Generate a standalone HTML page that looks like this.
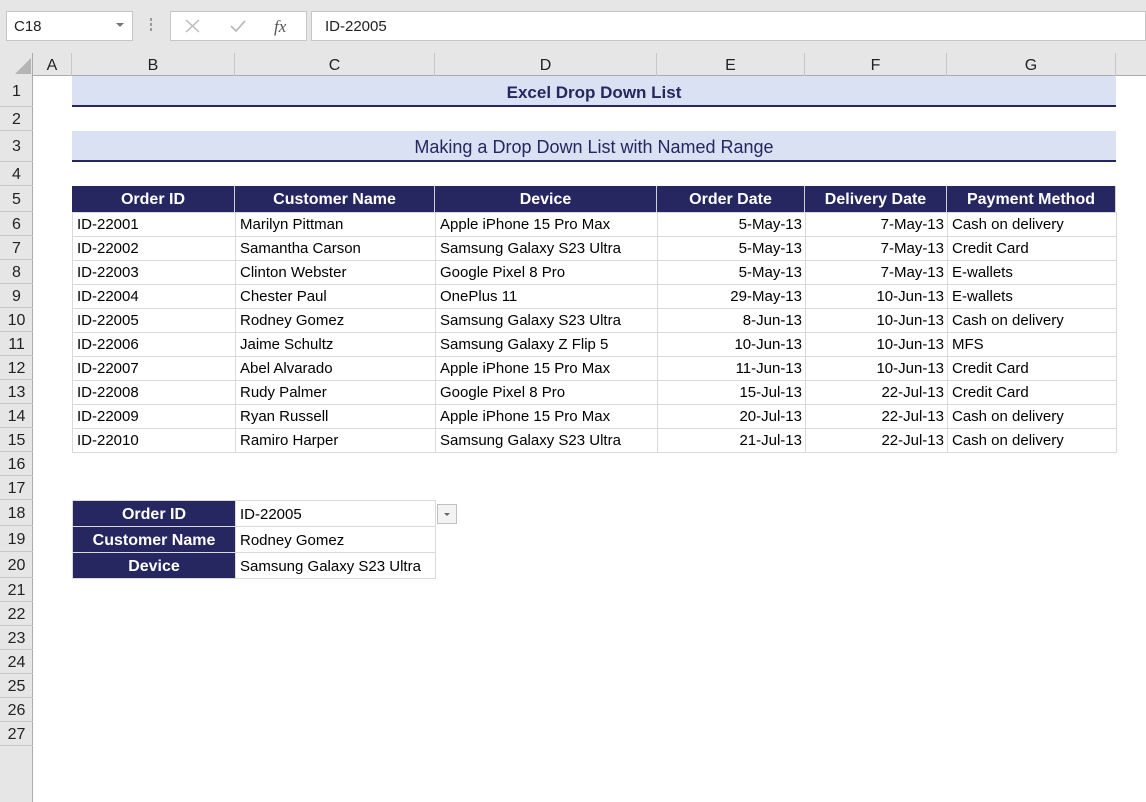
<!DOCTYPE html>
<html><head><meta charset="utf-8"><style>
body{margin:0;width:1146px;height:749px;overflow:hidden;background:#fff;font-family:"Liberation Sans",sans-serif;position:relative}
div{position:absolute;box-sizing:border-box}
.t{white-space:nowrap;overflow:visible;font-size:15px;line-height:1;display:flex;align-items:center}
#g .t{padding-top:2px}
</style></head><body>
<div style="left:0;top:0;width:1146px;height:53px;background:#e6e6e6"></div>
<div style="left:6px;top:11px;width:127px;height:30px;background:#fff;border:1px solid #c6c6c6"></div>
<div class="t" style="left:14px;top:11px;height:30px;font-size:15px;color:#222">C18</div>
<div style="left:116px;top:23px;width:0;height:0;border-left:4px solid transparent;border-right:4px solid transparent;border-top:4px solid #777"></div>
<div style="left:150px;top:18px;width:2px;height:3px;background:#999;box-shadow:0 5px #999,0 10px #999"></div>
<div style="left:170px;top:11px;width:137px;height:30px;background:#fff;border:1px solid #c6c6c6"></div>
<svg style="position:absolute;left:184px;top:18px" width="18" height="16"><path d="M2 2L15 14M15 2L2 14" stroke="#bbb" stroke-width="1.5"/></svg>
<svg style="position:absolute;left:229px;top:18px" width="18" height="16"><path d="M2 8L7 13L16 3" stroke="#bbb" stroke-width="1.8" fill="none"/></svg>
<div class="t" style="left:274px;top:11px;height:30px;font-family:'Liberation Serif',serif;font-style:italic;font-size:17px;color:#555">fx</div>
<div style="left:311px;top:11px;width:835px;height:30px;background:#fff;border:1px solid #c6c6c6"></div>
<div class="t" style="left:325px;top:11px;height:30px;font-size:15px;color:#222">ID-22005</div>
<div style="left:0;top:53px;width:1146px;height:23px;background:#e6e6e6;border-bottom:1px solid #ababab"></div>
<div style="left:0;top:53px;width:33px;height:749px;background:#e6e6e6;border-right:1px solid #ababab"></div>
<svg style="position:absolute;left:14px;top:57px" width="18" height="18"><path d="M17 1L17 17L1 17Z" fill="#b4b4b4"/></svg>
<div id="g"></div>
<script>
var cols=[33,72,235,435,657,805,947,1116],names="ABCDEFG";
var rows=[76,107,131,162,186,212];for(var i=6;i<=15;i++)rows.push(rows[rows.length-1]+24);
rows.push(476,500,526,552,578);for(var i=21;i<=27;i++)rows.push(rows[rows.length-1]+24);
var h='';
function d(x,y,w,hh,st,txt,cls){h+='<div '+(cls?'class="t" ':'')+'style="left:'+x+'px;top:'+y+'px;width:'+w+'px;height:'+hh+'px;'+st+'">'+(txt||'')+'</div>';}
for(var i=0;i<7;i++){d(cols[i],53,cols[i+1]-cols[i],23,'justify-content:center;color:#222;font-size:16px;border-right:1px solid #c8c8c8',names[i],1);}
for(var r=1;r<=27;r++){var y=rows[r-1],hh=rows[r]-y;d(0,y,33,hh,'justify-content:center;color:#222;font-size:16px;border-bottom:1px solid #c8c8c8',''+r,1);}
d(72,76,1044,29,'background:#d9e1f2');d(72,105,1044,2,'background:#262660');
d(72,76,1044,30,'justify-content:center;font-weight:bold;font-size:17px;color:#262660','Excel Drop Down List',1);
d(72,131,1044,29,'background:#d9e1f2');d(72,160,1044,2,'background:#262660');
d(72,131,1044,30,'justify-content:center;font-size:18px;color:#262660','Making a Drop Down List with Named Range',1);
var hd=['Order ID','Customer Name','Device','Order Date','Delivery Date','Payment Method'];
for(var c=0;c<6;c++)d(cols[c+1],186,cols[c+2]-cols[c+1],26,'background:#262660;color:#fff;font-weight:bold;font-size:16px;justify-content:center;border-right:1px solid #d0d0d0',hd[c],1);
var data=[["ID-22001","Marilyn Pittman","Apple iPhone 15 Pro Max","5-May-13","7-May-13","Cash on delivery"],
["ID-22002","Samantha Carson","Samsung Galaxy S23 Ultra","5-May-13","7-May-13","Credit Card"],
["ID-22003","Clinton Webster","Google Pixel 8 Pro","5-May-13","7-May-13","E-wallets"],
["ID-22004","Chester Paul","OnePlus 11","29-May-13","10-Jun-13","E-wallets"],
["ID-22005","Rodney Gomez","Samsung Galaxy S23 Ultra","8-Jun-13","10-Jun-13","Cash on delivery"],
["ID-22006","Jaime Schultz","Samsung Galaxy Z Flip 5","10-Jun-13","10-Jun-13","MFS"],
["ID-22007","Abel Alvarado","Apple iPhone 15 Pro Max","11-Jun-13","10-Jun-13","Credit Card"],
["ID-22008","Rudy Palmer","Google Pixel 8 Pro","15-Jul-13","22-Jul-13","Credit Card"],
["ID-22009","Ryan Russell","Apple iPhone 15 Pro Max","20-Jul-13","22-Jul-13","Cash on delivery"],
["ID-22010","Ramiro Harper","Samsung Galaxy S23 Ultra","21-Jul-13","22-Jul-13","Cash on delivery"]];
for(var r=0;r<10;r++){var y=212+24*r;for(var c=0;c<6;c++){var x=cols[c+1],w=cols[c+2]-x,right=(c==3||c==4);
d(x,y,w+1,25,'border:1px solid #d9d9d9;color:#000;padding:0 '+(right?'3px':'0')+' 0 4px;'+(right?'justify-content:flex-end;':''),data[r][c],1);}}
var l=['Order ID','Customer Name','Device'],v=['ID-22005','Rodney Gomez','Samsung Galaxy S23 Ultra'];
for(var i=0;i<3;i++){var y=500+26*i;d(72,y,164,27,'background:#262660;color:#fff;font-weight:bold;font-size:16px;justify-content:center;border:1px solid #d9d9d9',l[i],1);
d(235,y,201,27,'border:1px solid #d9d9d9;color:#000;padding-left:4px',v[i],1);}
d(437,504,20,20,'background:#f3f3f3;border:1px solid #c0c0c0');
h+='<div style="left:444px;top:513px;width:0;height:0;border-left:3px solid transparent;border-right:3px solid transparent;border-top:3px solid #666"></div>';
document.getElementById('g').innerHTML=h;
</script>
</body></html>
